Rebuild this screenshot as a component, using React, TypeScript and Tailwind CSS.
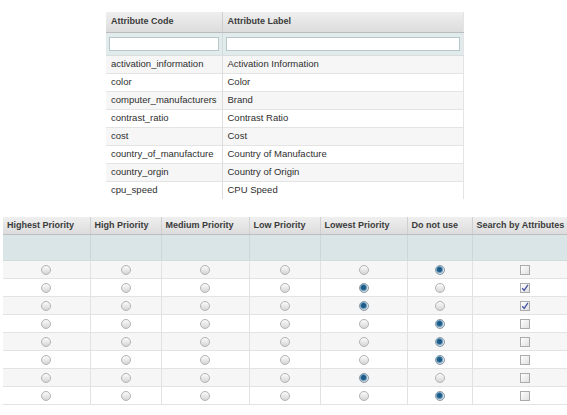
import React from 'react';

const attributes = [
  ['activation_information', 'Activation Information'],
  ['color', 'Color'],
  ['computer_manufacturers', 'Brand'],
  ['contrast_ratio', 'Contrast Ratio'],
  ['cost', 'Cost'],
  ['country_of_manufacture', 'Country of Manufacture'],
  ['country_orgin', 'Country of Origin'],
  ['cpu_speed', 'CPU Speed'],
];

const priorities = [
  { label: 'Highest Priority', w: 'w-[87px]' },
  { label: 'High Priority', w: 'w-[71px]' },
  { label: 'Medium Priority', w: 'w-[88px]' },
  { label: 'Low Priority', w: 'w-[71px]' },
  { label: 'Lowest Priority', w: 'w-[87px]' },
  { label: 'Do not use', w: 'w-[65px]' },
];

// selected priority index + search checkbox per row
const rows: { sel: number; search: boolean }[] = [
  { sel: 5, search: false },
  { sel: 4, search: true },
  { sel: 4, search: true },
  { sel: 5, search: false },
  { sel: 5, search: false },
  { sel: 5, search: false },
  { sel: 4, search: false },
  { sel: 5, search: false },
];

function Radio({ on }: { on: boolean }) {
  return (
    <span
      className={`inline-flex align-middle items-center justify-center w-[10px] h-[10px] rounded-full border ${
        on ? 'border-[#8d9aa5] bg-gradient-to-b from-[#f4f6f8] to-[#c9d3db]' : 'border-[#b3b3b3] bg-gradient-to-b from-[#fbfbfb] to-[#d6d6d6]'
      }`}
    >
      {on && <span className="block w-[5px] h-[5px] rounded-full bg-[#1d5b86] shadow-[0_0_0_1px_#6a9cbf]" />}
    </span>
  );
}

function Check({ on }: { on: boolean }) {
  return (
    <span className="inline-flex align-middle items-center justify-center w-[10px] h-[10px] border border-[#ababab] bg-gradient-to-br from-[#ffffff] to-[#e0e0e0]">
      {on && (
        <svg width="8" height="8" viewBox="0 0 8 8" className="block">
          <path d="M1.2 4.2 L3.2 6.4 L6.9 0.8" fill="none" stroke="#4656a3" strokeWidth="1.3" />
        </svg>
      )}
    </span>
  );
}

const hdr = 'bg-gradient-to-b from-[#efefef] to-[#dcdcdc] border-b border-b-[#bdbdbd] text-left font-bold text-[#3b3b3b] text-[9px]';

export default function App() {
  return (
    <div className="w-[567px] h-[415px] overflow-hidden bg-white text-[#2e2e2e] font-['Liberation_Sans',Arial,sans-serif]">
      {/* attribute list */}
      <table className="table-fixed border-collapse ml-[106px] mt-[12px] w-[357px] border-r border-r-[#e4e4e4]">
        <colgroup>
          <col className="w-[116px]" />
          <col className="w-[241px]" />
        </colgroup>
        <thead>
          <tr className="h-[20px]">
            <th className={`${hdr} pl-[5px] border-r border-r-[#d0d0d0]`}>Attribute Code</th>
            <th className={`${hdr} pl-[5px]`}>Attribute Label</th>
          </tr>
          <tr className="h-[23px] bg-[#e2ebec]">
            <th className="px-[3px] border-r border-r-[#d3dcdd] border-b border-b-[#d8dede]">
              <div className="h-[14px] bg-white border border-[#b7c7ca]" />
            </th>
            <th className="px-[3px] border-b border-b-[#d8dede]">
              <div className="h-[14px] bg-white border border-[#b7c7ca]" />
            </th>
          </tr>
        </thead>
        <tbody className="text-[9.5px]">
          {attributes.map(([code, label], i) => (
            <tr key={code} className={`h-[18px] ${i % 2 === 0 ? 'bg-[#f6f6f6]' : 'bg-white'} ${i < attributes.length - 1 ? 'border-b border-b-[#e4e4e4]' : ''}`}>
              <td className="pl-[5px] border-r border-r-[#dddddd] whitespace-nowrap">{code}</td>
              <td className="pl-[5px] whitespace-nowrap">{label}</td>
            </tr>
          ))}
        </tbody>
      </table>

      {/* priority grid */}
      <table className="table-fixed border-collapse ml-[3px] mt-[18px] w-[575px]">
        <colgroup>
          {priorities.map(p => (
            <col key={p.label} className={p.w} />
          ))}
          <col className="w-[106px]" />
        </colgroup>
        <thead>
          <tr className="h-[17px]">
            {priorities.map(p => (
              <th key={p.label} className={`${hdr} pl-[4px] border-r border-r-[#d0d0d0] whitespace-nowrap`}>
                {p.label}
              </th>
            ))}
            <th className={`${hdr} pl-[4px] whitespace-nowrap`}>Search by Attributes</th>
          </tr>
          <tr className="h-[26px] bg-[#dae5e7]">
            {priorities.map(p => (
              <th key={p.label} className="border-r border-r-[#cbd8da] border-b border-b-[#d3dcdd]" />
            ))}
            <th className="border-b border-b-[#d3dcdd]" />
          </tr>
        </thead>
        <tbody>
          {rows.map((r, i) => (
            <tr key={i} className={`h-[18px] border-b border-b-[#e3e3e3] ${i % 2 === 0 ? 'bg-[#f6f6f6]' : 'bg-white'}`}>
              {priorities.map((p, j) => (
                <td key={p.label} className="text-center align-middle border-r border-r-[#e2e2e2] leading-none">
                  <Radio on={r.sel === j} />
                </td>
              ))}
              <td className="text-center align-middle leading-none">
                <Check on={r.search} />
              </td>
            </tr>
          ))}
        </tbody>
      </table>
    </div>
  );
}
